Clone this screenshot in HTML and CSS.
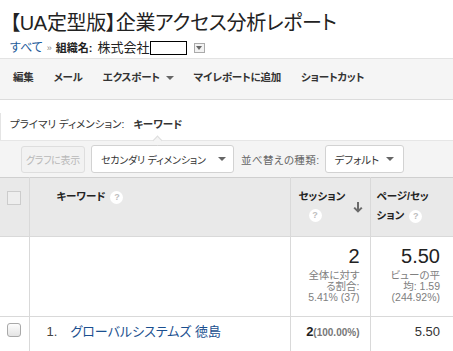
FILE: index.html
```html
<!DOCTYPE html>
<html lang="ja">
<head>
<meta charset="utf-8">
<link rel="stylesheet" href="styles.css">
</head>
<body>
<div class="head">
  <h1 class="title">【UA定型版】企業アクセス分析レポート</h1>
  <div class="crumbs">
    <a class="all">すべて</a>
    <span class="raquo">»</span>
    <span class="orglabel">組織名:</span>
    <span class="org">株式会社</span><span class="blank"></span>
    <span class="dd"><span class="tri"></span></span>
  </div>
</div>
<div class="toolbar">
  <span class="tb">編集</span>
  <span class="tb">メール</span>
  <span class="tb">エクスポート <span class="tri dark"></span></span>
  <span class="tb">マイレポートに追加</span>
  <span class="tb">ショートカット</span>
</div>
<div class="primary">
  <span class="plabel">プライマリ ディメンション:</span>
  <span class="pval">キーワード</span>
  <span class="notch"></span>
</div>
<div class="controls">
  <span class="btn disabled">グラフに表示</span>
  <span class="btn sec"><span>セカンダリ ディメンション</span><span class="tri dark"></span></span>
  <span class="sortlabel">並べ替えの種類:</span>
  <span class="btn def"><span>デフォルト</span><span class="tri dark"></span></span>
</div>
<table class="grid">
  <colgroup><col class="c1"><col class="c2"><col class="c3"><col class="c4"></colgroup>
  <tr class="hrow">
    <td class="cb"><span class="box"></span></td>
    <td class="kw"><span class="hb">キーワード</span> <span class="help">?</span></td>
    <td class="ses">
      <div class="sesin">
        <div class="hb">セッション<br><span class="help">?</span></div>
        <svg class="arrow" width="10" height="11" viewBox="0 0 10 11"><path d="M5 0V9.5M1.2 5.6L5 9.4L8.8 5.6" stroke="#6a6a6a" stroke-width="2" fill="none"/></svg>
      </div>
    </td>
    <td class="pps"><span class="hb">ページ/セッ<br>ション</span> <span class="help">?</span></td>
  </tr>
  <tr class="srow">
    <td></td>
    <td></td>
    <td class="num">
      <div class="big">2</div>
      <div class="sub">全体に対す<br>る割合:<br>5.41% (37)</div>
    </td>
    <td class="num last">
      <div class="big">5.50</div>
      <div class="sub">ビューの平<br>均: 1.59<br>(244.92%)</div>
    </td>
  </tr>
  <tr class="drow">
    <td class="cb"><span class="rbox"></span></td>
    <td class="kwd"><span class="idx">1.</span><a class="kwlink">グローバルシステムズ 徳島</a></td>
    <td class="num"><b class="v">2</b><span class="pct">(100.00%)</span></td>
    <td class="num last"><span class="v2">5.50</span></td>
  </tr>
</table>
</body>
</html>
```
FILE: styles.css
```css
* { box-sizing: border-box; }
body {
  margin: 0;
  width: 453px;
  height: 351px;
  overflow: hidden;
  background: #fff;
  color: #333;
  font-family: "Liberation Sans", Arial, "Noto Sans CJK JP", sans-serif;
  font-feature-settings: "palt";
}
.head { padding: 0 10px; }
.title {
  margin: 10px 0 0 0;
  font-size: 20px;
  line-height: 26px;
  font-weight: normal;
  color: #222;
  letter-spacing: -0.3px;
}
.crumbs {
  margin-top: 4px;
  height: 16px;
  line-height: 16px;
  display: flex;
  align-items: center;
  white-space: nowrap;
}
.all { color: #1a5a9a; font-size: 12px; }
.raquo { color: #888; font-size: 9px; margin: 0 4px 0 4px; }
.orglabel { font-size: 11px; font-weight: bold; color: #222; }
.org { font-size: 13px; color: #222; margin-left: 5px; }
.blank {
  display: inline-block;
  width: 37px;
  height: 14px;
  border: 1px solid #000;
  background: #fff;
}
.dd {
  display: inline-flex;
  align-items: center;
  justify-content: center;
  width: 11px;
  height: 10px;
  margin-left: 7px;
  border: 1px solid #aaa;
  background: #f2f2f2;
}
.tri {
  display: inline-block;
  width: 0;
  height: 0;
  border-left: 3px solid transparent;
  border-right: 3px solid transparent;
  border-top: 4px solid #666;
  vertical-align: middle;
}
.tri.dark { border-left-width: 4px; border-right-width: 4px; border-top: 4px solid #666; margin-left: 3px; }
.toolbar {
  margin-top: 2px;
  background: #f5f5f5;
  border-top: 1px solid #e3e3e3;
  border-bottom: 1px solid #dcdcdc;
  padding: 9px 13px 13px;
  display: flex;
  gap: 20px;
  line-height: 18px;
  font-size: 10.5px;
  font-weight: bold;
  color: #333;
  white-space: nowrap;
  letter-spacing: -0.2px;
}
.primary {
  position: relative;
  margin-top: 13px;
  height: 27px;
  border-left: 1px solid #e4e4e4;
  padding-left: 9px;
  line-height: 22px;
  font-size: 10.5px;
  color: #333;
  white-space: nowrap;
}
.pval { font-weight: bold; margin-left: 6px; }
.notch {
  position: absolute;
  left: 153px;
  top: 24px;
  width: 7px;
  height: 7px;
  background: #f4f4f4;
  border-left: 1px solid #ddd;
  border-top: 1px solid #ddd;
  transform: rotate(45deg);
}
.controls {
  background: #f4f4f4;
  border-top: 1px solid #e6e6e6;
  padding: 4px 0 4px 21px;
  display: flex;
  align-items: center;
  height: 37px;
  font-size: 10.5px;
  white-space: nowrap;
}
.btn {
  display: inline-flex;
  align-items: center;
  height: 28px;
  border: 1px solid #d2d2d2;
  border-radius: 3px;
  background: #fff;
  color: #333;
}
.btn.disabled {
  width: 64px;
  height: 27px;
  justify-content: center;
  background: #f2f2f2;
  border-color: #dedede;
  color: #b8b8b8;
  font-size: 10px;
  letter-spacing: -0.3px;
}
.btn.sec {
  margin-left: 6px;
  width: 143px;
  padding: 0 7px 0 9px;
  justify-content: space-between;
  font-size: 10px;
  letter-spacing: -0.2px;
}
.sortlabel { margin-left: 7px; color: #666; letter-spacing: 0.4px; }
.btn.def {
  margin-left: 6px;
  width: 79px;
  padding: 0 9px 0 8px;
  justify-content: space-between;
}
.grid {
  width: 453px;
  table-layout: fixed;
  border-collapse: collapse;
  font-size: 10.5px;
}
.c1 { width: 29px; }
.c2 { width: 261px; }
.c3 { width: 80px; }
.c4 { width: 83px; }
.grid td {
  border-right: 1px solid #d9d9d9;
  border-top: 1px solid #d9d9d9;
  vertical-align: top;
  padding: 0;
}
.grid td:last-child { border-right: none; }
.hrow td {
  background: #e9e9e9;
  height: 59px;
  border-top: 1px solid #cfcfcf;
  padding-top: 9px;
  line-height: 19px;
}
.hrow td.cb { padding-top: 13px; }
.cb { text-align: center; }
.box {
  display: inline-block;
  width: 14px;
  height: 14px;
  border: 1px solid #cccccc;
  background: #eeeeee;
  vertical-align: top;
}
.hb { font-weight: bold; color: #222; }
.kw { padding-left: 27px !important; }
.help {
  display: inline-block;
  width: 13px;
  height: 13px;
  border-radius: 50%;
  background: #fff;
  color: #bdbdbd;
  font-size: 9px;
  line-height: 13px;
  text-align: center;
  font-weight: bold;
  vertical-align: middle;
  margin-left: 2px;
}
.ses { padding-left: 8px !important; }
.sesin { display: flex; align-items: flex-start; justify-content: space-between; padding-right: 7px; }
.sesin .help { margin-left: 10px; margin-top: -2px; }
.arrow { margin-top: 15px; display: block; }
.pps { padding-left: 6px !important; }
.srow td { height: 80px; background: #fff; }
.num { text-align: right; padding-right: 10px !important; }
.num.last { padding-right: 13px !important; }
.srow .num { padding-top: 8px !important; }
.big { font-size: 20px; line-height: 22px; color: #222; }
.sub { margin-top: 3px; font-size: 10.5px; line-height: 11px; color: #808080; }
.drow td { height: 35px; padding-top: 6px; line-height: 18px; }
.rbox {
  display: inline-block;
  width: 14px;
  height: 14px;
  margin-top: 0;
  border: 1px solid #a9a9a9;
  border-radius: 3px;
  background: linear-gradient(#fdfdfd, #e4e4e4);
  vertical-align: top;
}
.kwd { padding-left: 17px !important; font-size: 13px; white-space: nowrap; }
.idx { color: #444; display: inline-block; width: 24px; }
.kwlink { color: #1a4f8f; }
.v { font-size: 13px; color: #222; }
.pct { font-size: 10px; color: #777; font-weight: bold; }
.v2 { font-size: 13px; color: #333; }
```
